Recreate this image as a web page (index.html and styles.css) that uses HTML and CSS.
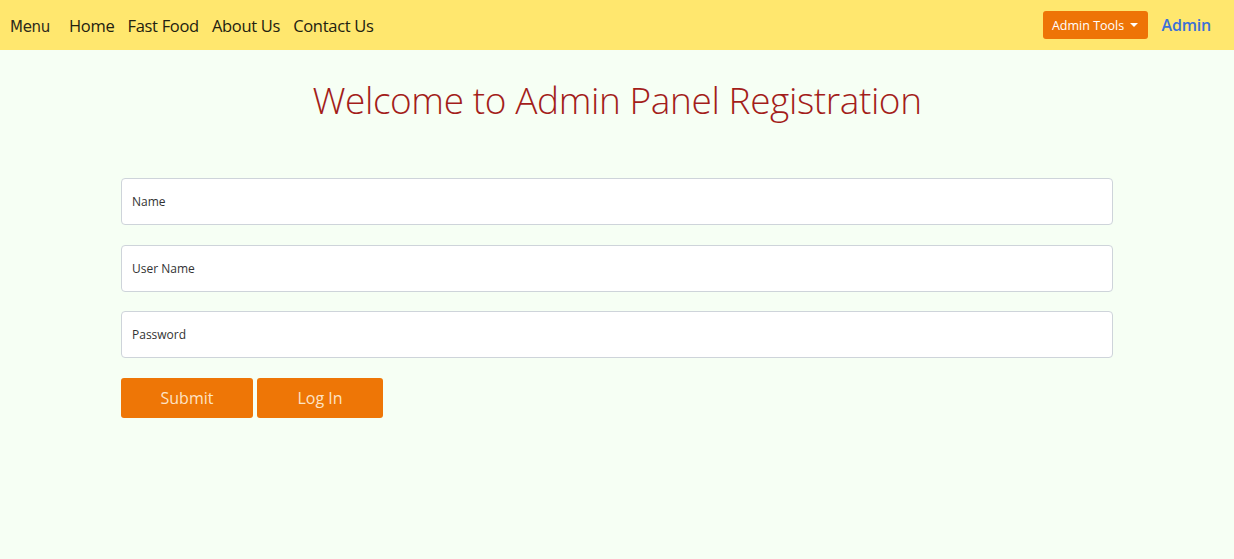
FILE: index.html
```html
<!DOCTYPE html>
<html lang="en">
<head>
<meta charset="utf-8">
<title>Admin Panel Registration</title>
<link rel="stylesheet" href="styles.css">
</head>
<body>
<nav class="navbar">
  <div class="nav-left">
    <span class="brand">Menu</span>
    <a class="nav-link" href="#">Home</a>
    <a class="nav-link" href="#">Fast Food</a>
    <a class="nav-link" href="#">About Us</a>
    <a class="nav-link" href="#">Contact Us</a>
  </div>
  <div class="nav-right">
    <button class="tools-btn" type="button">Admin Tools <span class="caret"></span></button>
    <a class="admin-link" href="#">Admin</a>
  </div>
</nav>
<main class="main">
  <h1 class="title">Welcome to Admin Panel Registration</h1>
  <form class="form">
    <input class="field" type="text" placeholder="Name">
    <input class="field" type="text" placeholder="User Name">
    <input class="field" type="password" placeholder="Password">
    <div class="actions">
      <button class="btn btn-submit" type="button">Submit</button>
      <button class="btn btn-login" type="button">Log In</button>
    </div>
  </form>
</main>
</body>
</html>
```
FILE: styles.css
```css
* { box-sizing: border-box; }
html, body { margin: 0; height: 100%; }
body {
  background: #f6fff4;
  font-family: "Open Sans", "Noto Sans", sans-serif;
  color: #212529;
}
.navbar {
  height: 50px;
  background: #ffe76e;
  display: flex;
  align-items: center;
  justify-content: space-between;
  padding: 0 23px 0 10px;
}
.nav-left { display: flex; align-items: center; gap: 13px; }
.brand {
  font-family: "Comic Sans MS", "DejaVu Sans", sans-serif;
  font-size: 15px;
  color: #2c2a1c;
  margin: 3px 6px 0 0;
  letter-spacing: -0.3px;
}
.nav-link {
  text-decoration: none;
  color: #222110;
  font-size: 16.5px;
  font-weight: 500;
  letter-spacing: -0.3px;
}
.nav-right { display: flex; align-items: center; gap: 14px; }
.tools-btn {
  background: #ee7406;
  color: #fff;
  border: 0;
  border-radius: 3px;
  height: 28px;
  width: 105px;
  font-family: "Open Sans", sans-serif;
  font-size: 12.5px;
  padding: 0;
  display: flex;
  align-items: center;
  justify-content: center;
  gap: 6px;
}
.caret {
  width: 0; height: 0;
  border-left: 4px solid transparent;
  border-right: 4px solid transparent;
  border-top: 4px solid #fff;
}
.admin-link {
  color: #3b70d8;
  text-decoration: none;
  font-size: 16px;
  font-weight: 600;
  letter-spacing: -0.2px;
}
.main { width: 992px; margin: 0 auto; }
.title {
  margin: 25px 0 53px;
  text-align: center;
  font-weight: 300;
  font-size: 37px;
  line-height: 50px;
  color: #a31d1a;
  letter-spacing: -0.4px;
}
.form { display: flex; flex-direction: column; gap: 19.5px; }
.field {
  height: 47px;
  width: 100%;
  background: #fff;
  border: 1px solid #ced4da;
  border-radius: 4px;
  padding: 0 10px;
  font-family: "Open Sans", sans-serif;
  font-size: 12px;
  color: #333;
}
.field::placeholder { color: #333; }
.actions { display: flex; gap: 4px; }
.btn {
  height: 40px;
  background: #ee7606;
  color: #fde3c5;
  border: 0;
  border-radius: 3px;
  font-family: "Open Sans", sans-serif;
  font-size: 16px;
}
.btn-submit { width: 132px; }
.btn-login { width: 126px; }
```
